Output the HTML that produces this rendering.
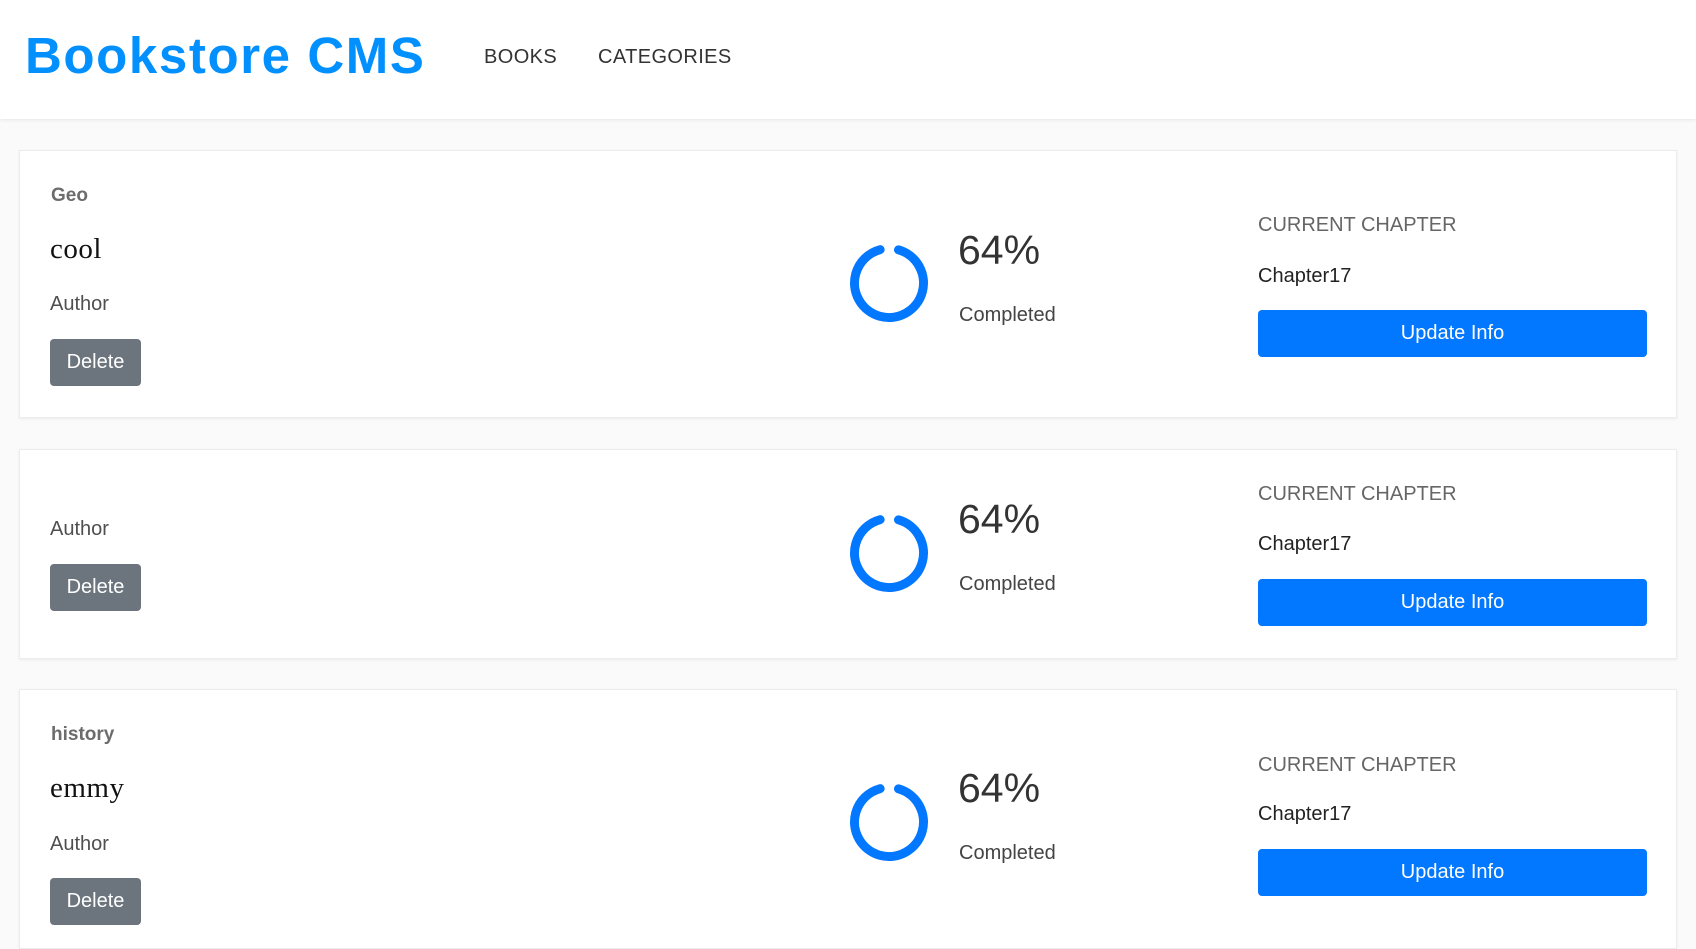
<!DOCTYPE html>
<html><head><meta charset="utf-8"><style>
*{margin:0;padding:0;box-sizing:border-box}
body{width:1696px;height:927px;overflow:hidden;background:#fafafa;font-family:"Liberation Sans",sans-serif;position:relative;color:#333}
.hdr{position:absolute;left:0;top:0;width:1696px;height:119px;background:#fff;box-shadow:0 1px 4px rgba(0,0,0,.08)}
.a{position:absolute;white-space:nowrap;line-height:1}
.logo{left:25px;top:30px;font-size:51px;font-weight:bold;color:#0290ff;letter-spacing:1.6px}
.nav{font-size:20px;color:#333;top:47px;letter-spacing:0.4px}
.card{position:absolute;left:19px;width:1658px;background:#fff;border:1px solid #ececec;box-shadow:0 1px 3px rgba(0,0,0,.06)}
.cat{font-size:19px;font-weight:bold;color:#6c6c6c}
.title{font-family:"Liberation Serif",serif;font-size:29px;color:#121212;letter-spacing:0.5px}
.auth{font-size:20px;color:#4f4f4f}
.del{position:absolute;left:50px;width:91px;height:47px;background:#6c757d;border-radius:4px;color:#fff;font-size:20px;display:flex;align-items:center;justify-content:center}
.pct{font-size:41px;color:#333}
.comp{font-size:20px;color:#444}
.cc{font-size:20px;color:#666}
.ch{font-size:20px;color:#222}
.upd{position:absolute;left:1258px;width:389px;height:47px;background:#0277ff;border-radius:4px;color:#fff;font-size:20px;display:flex;align-items:center;justify-content:center}
svg{position:absolute}
</style></head><body>
<div class="hdr"></div>
<div class="a logo">Bookstore CMS</div>
<div class="a nav" style="left:484px">BOOKS</div>
<div class="a nav" style="left:598px">CATEGORIES</div>

<div class="card" style="top:150px;height:268px"></div>
<div class="card" style="top:449px;height:210px"></div>
<div class="card" style="top:689px;height:260px"></div>

<!-- card 1 -->
<div class="a cat" style="left:51px;top:186px">Geo</div>
<div class="a title" style="left:50px;top:235px">cool</div>
<div class="a auth" style="left:50px;top:294px">Author</div>
<div class="del" style="top:339px">Delete</div>
<svg style="left:846px;top:240px" width="86" height="86" viewBox="0 0 86 86"><circle cx="43" cy="43" r="34.5" fill="none" stroke="#0277ff" stroke-width="9" stroke-linecap="round" stroke-dasharray="197.8 19" transform="rotate(-74 43 43)"/></svg>
<div class="a pct" style="left:958px;top:230px">64%</div>
<div class="a comp" style="left:959px;top:305px">Completed</div>
<div class="a cc" style="left:1258px;top:215px">CURRENT CHAPTER</div>
<div class="a ch" style="left:1258px;top:266px">Chapter17</div>
<div class="upd" style="top:310px">Update Info</div>

<!-- card 2 -->
<div class="a auth" style="left:50px;top:519px">Author</div>
<div class="del" style="top:564px">Delete</div>
<svg style="left:846px;top:510px" width="86" height="86" viewBox="0 0 86 86"><circle cx="43" cy="43" r="34.5" fill="none" stroke="#0277ff" stroke-width="9" stroke-linecap="round" stroke-dasharray="197.8 19" transform="rotate(-74 43 43)"/></svg>
<div class="a pct" style="left:958px;top:499px">64%</div>
<div class="a comp" style="left:959px;top:574px">Completed</div>
<div class="a cc" style="left:1258px;top:484px">CURRENT CHAPTER</div>
<div class="a ch" style="left:1258px;top:534px">Chapter17</div>
<div class="upd" style="top:579px">Update Info</div>

<!-- card 3 -->
<div class="a cat" style="left:51px;top:725px">history</div>
<div class="a title" style="left:50px;top:774px">emmy</div>
<div class="a auth" style="left:50px;top:834px">Author</div>
<div class="del" style="top:878px">Delete</div>
<svg style="left:846px;top:779px" width="86" height="86" viewBox="0 0 86 86"><circle cx="43" cy="43" r="34.5" fill="none" stroke="#0277ff" stroke-width="9" stroke-linecap="round" stroke-dasharray="197.8 19" transform="rotate(-74 43 43)"/></svg>
<div class="a pct" style="left:958px;top:768px">64%</div>
<div class="a comp" style="left:959px;top:843px">Completed</div>
<div class="a cc" style="left:1258px;top:755px">CURRENT CHAPTER</div>
<div class="a ch" style="left:1258px;top:804px">Chapter17</div>
<div class="upd" style="top:849px">Update Info</div>
</body></html>
